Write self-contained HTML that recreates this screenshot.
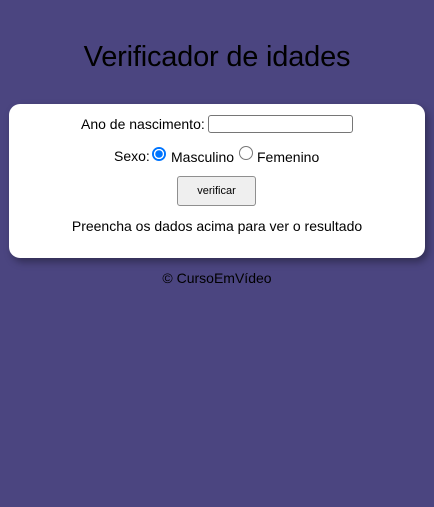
<!DOCTYPE html>
<html><head><style>
body{margin:0;width:434px;height:507px;background:#4b4580;font-family:"Liberation Sans",Arial,sans-serif;position:relative;overflow:hidden}
.a{position:absolute;white-space:nowrap}
h1{position:absolute;left:0;width:434px;top:41px;margin:0;text-align:center;font-size:29px;font-weight:normal;color:#000;letter-spacing:-0.2px}
.card{position:absolute;left:9px;top:104px;width:416px;height:154px;background:#fff;border-radius:11px;box-shadow:3px 4px 8px rgba(0,0,0,.35)}
.t{font-size:14px;color:#000}
.inp{position:absolute;left:208px;top:115px;width:143px;height:16px;border:1px solid #767676;border-radius:3px;background:#fff}
.rad{position:absolute;width:14px;height:14px;border-radius:50%;box-sizing:border-box}
.btn{position:absolute;left:177px;top:176px;width:77px;height:28px;border:1px solid #8f8f8f;border-radius:3px;background:#efefef;font-size:11px;text-align:center;line-height:28px}
</style></head><body>
<h1>Verificador de idades</h1>
<div class="card"></div>
<div class="a t" style="left:81px;top:116px">Ano de nascimento:</div>
<div class="inp"></div>
<div class="a t" style="left:114px;top:148px">Sexo:</div>
<div class="rad" style="left:152px;top:147px;border:1px solid #0075ff;background:radial-gradient(circle,#0075ff 0 3.6px,#fff 3.9px 5px,#0075ff 5.2px)"></div>
<div class="a t" style="left:171px;top:149px">Masculino</div>
<div class="rad" style="left:239px;top:146px;border:1px solid #767676;background:#fff"></div>
<div class="a t" style="left:257px;top:149px">Femenino</div>
<div class="btn">verificar</div>
<div class="a t" style="left:0;width:434px;text-align:center;top:218px">Preencha os dados acima para ver o resultado</div>
<div class="a t" style="left:0;width:434px;text-align:center;top:270px">© CursoEmVídeo</div>
</body></html>
